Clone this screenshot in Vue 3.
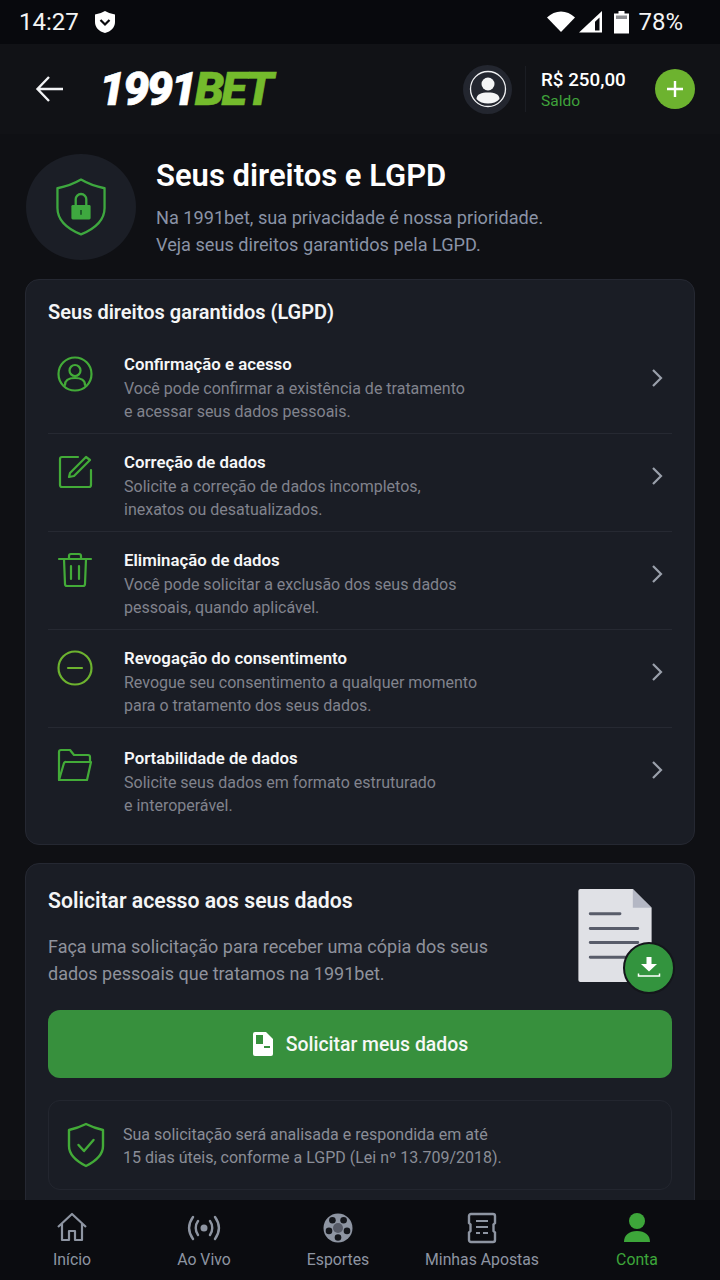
<template>
  <div class="app">
    <div class="status-bar">
      <div class="status-left">
        <span class="time">14:27</span>
        <svg class="status-shield" viewBox="0 0 22 24" width="22" height="24">
          <path d="M11 1Q16 4 21 4.500V12c0 5.500-4 9.500-10 11C5 21.500 1 17.500 1 12V4.500Q6 4 11 1Z" fill="#fff" />
          <path d="M6.500 10 11 14.500 15.500 10" fill="none" stroke="#08090d" stroke-width="2.200" />
        </svg>
      </div>
      <div class="status-right">
        <svg class="s-wifi" viewBox="0 0 28 24" width="28" height="24"><path d="M14 22 0 7.500C4 3.500 9 1.500 14 1.500s10 2 14 6Z" fill="#fff" /></svg>
        <svg class="s-signal" viewBox="0 0 23 24" width="23" height="24"><path d="M0 22.500 23 1v21.500Z" fill="#fff" /><path d="M16 20.500h4.500V7.500L16 11.700Z" fill="#08090d" /></svg>
        <svg class="s-batt" viewBox="0 0 15 24" width="15" height="24"><path d="M4.500 1h6v2.500H15V23.500H0V3.500h4.500Z" fill="#fff" /><path d="M2 5.500h11V9H2Z" fill="#8b8c90" /></svg>
        <span class="battery">78%</span>
      </div>
    </div>

    <header class="top-bar">
      <svg class="back" viewBox="0 0 30 30" width="30" height="30">
        <path d="M29 15H4M15 3 3.500 15 15 27" fill="none" stroke="#f2f3f5" stroke-width="2.400" />
      </svg>
      <div class="logo"><span class="logo-num">1991</span><span class="logo-bet">BET</span></div>
      <div class="account">
        <div class="avatar">
          <svg viewBox="0 0 38 38" width="38" height="38">
            <circle cx="19" cy="19" r="17.500" fill="none" stroke="#f0f1f3" stroke-width="1.300" />
            <circle cx="19" cy="14" r="6.500" fill="#f4f5f6" />
            <path d="M7.500 29c0-5 5-6.500 11.500-6.500S30.500 24 30.500 29c-2.500 3-7 4.500-11.500 4.500S10 32 7.500 29Z" fill="#f4f5f6" />
          </svg>
        </div>
        <div class="divider"></div>
        <div class="balance">
          <span class="amount">R$ 250,00</span>
          <span class="saldo">Saldo</span>
        </div>
        <div class="add">
          <svg viewBox="0 0 20 20" width="20" height="20"><path d="M10 2v16M2 10h16" stroke="#fff" stroke-width="2.400" /></svg>
        </div>
      </div>
    </header>

    <main class="content">
      <section class="hero">
        <div class="hero-icon">
          <svg viewBox="0 0 52 60" width="50" height="58">
            <path d="M26 1.500Q37 8 50.500 10.500V31c0 13-10 21.500-24.500 27.500C11.500 52.500 1.500 44 1.500 31V10.500Q15 8 26 1.500Z" fill="none" stroke="#3ea83f" stroke-width="2.400" stroke-linejoin="round" />
            <rect x="16" y="28" width="20" height="15" rx="1.500" fill="#3ea83f" />
            <path d="M20.500 28v-6a5.500 5.500 0 0 1 11 0v6" fill="none" stroke="#3ea83f" stroke-width="2.400" />
            <path d="M26 33v5" stroke="#1f5d2a" stroke-width="2" />
          </svg>
        </div>
        <div class="hero-text">
          <h1>Seus direitos e LGPD</h1>
          <p>Na 1991bet, sua privacidade é nossa prioridade.<br />Veja seus direitos garantidos pela LGPD.</p>
        </div>
      </section>

      <section class="card rights">
        <h2>Seus direitos garantidos (LGPD)</h2>
        <div v-for="item in rights" :key="item.title" class="row">
          <svg class="row-icon" :class="{ lime: item.lime }" viewBox="0 0 36 36" width="36" height="36" fill="none" stroke-width="2.200" stroke-linecap="round" stroke-linejoin="round">
            <path v-for="d in item.paths" :key="d" :d="d" />
          </svg>
          <div class="row-text">
            <h3>{{ item.title }}</h3>
            <p>{{ item.line1 }}<br />{{ item.line2 }}</p>
          </div>
          <svg class="chevron" viewBox="0 0 14 20" width="14" height="20"><path d="M3 2l8 8-8 8" fill="none" stroke="#9aa0ab" stroke-width="2.200" /></svg>
        </div>
      </section>

      <section class="card request">
        <div class="request-top">
          <div class="request-text">
            <h2>Solicitar acesso aos seus dados</h2>
            <p>Faça uma solicitação para receber uma cópia dos seus<br />dados pessoais que tratamos na 1991bet.</p>
          </div>
          <div class="doc">
            <svg viewBox="0 0 76 96" width="76" height="95">
              <path d="M3 1h53l19 19v73a2 2 0 0 1-2 2H3a2 2 0 0 1-2-2V3a2 2 0 0 1 2-2Z" fill="#e0e1e6" />
              <path d="M56 1v19h19Z" fill="#b4b7c4" />
              <path d="M13 26h30M13 41h48M13 55h48M13 70h48" stroke="#585c6a" stroke-width="3" stroke-linecap="round" />
            </svg>
            <div class="doc-badge">
              <svg viewBox="0 0 24 24" width="24" height="24">
                <path d="M9.500 1h5v7h5.500l-8 7.500L4 8h5.500Z" fill="#fff" />
                <path d="M1.500 17.500v2.500h21v-2.500" fill="none" stroke="#fff" stroke-width="1.500" />
              </svg>
            </div>
          </div>
        </div>
        <button class="cta" type="button">
          <svg viewBox="0 0 22 26" width="22" height="26">
            <path d="M3 1h11l7 7v15a2 2 0 0 1-2 2H3a2 2 0 0 1-2-2V3a2 2 0 0 1 2-2Z" fill="#fff" />
            <path d="M4 4h7v9H4ZM4 4v18" fill="#37903d" />
            <path d="M7 10.500h3v5h9" fill="none" stroke="#fff" stroke-width="0" />
            <path d="M12 16h6" stroke="#37903d" stroke-width="2" />
          </svg>
          Solicitar meus dados
        </button>
        <div class="notice">
          <svg viewBox="0 0 38 46" width="38" height="46" fill="none" stroke="#43ab38" stroke-width="2.400" stroke-linejoin="round">
            <path d="M19 2Q27 6 36 8v16c0 9-7 15-17 20C9 39 2 33 2 24V8Q11 6 19 2Z" />
            <path d="M11.500 23l5.500 6 9.500-11" stroke-linecap="round" />
          </svg>
          <p>Sua solicitação será analisada e respondida em até<br />15 dias úteis, conforme a LGPD (Lei nº 13.709/2018).</p>
        </div>
      </section>
    </main>

    <nav class="bottom-nav">
      <div class="nav-item">
        <svg viewBox="0 0 32 32" width="32" height="32" fill="none" stroke="#8e95a2" stroke-width="2.200" stroke-linejoin="round">
          <path d="M2 15 16 2l14 13M6 12v16h7v-9h6v9h7V12" />
        </svg>
        <span>Início</span>
      </div>
      <div class="nav-item">
        <svg viewBox="0 0 34 32" width="34" height="32" fill="none" stroke="#8e95a2" stroke-width="2.400" stroke-linecap="round">
          <circle cx="17" cy="16" r="3.500" fill="#8e95a2" stroke="none" />
          <path d="M11 9c-3 4-3 10 0 14M23 9c3 4 3 10 0 14M6 5c-5 7-5 15 0 22M28 5c5 7 5 15 0 22" />
        </svg>
        <span>Ao Vivo</span>
      </div>
      <div class="nav-item">
        <svg viewBox="0 0 32 32" width="32" height="32">
          <circle cx="16" cy="16" r="14.500" fill="#8e95a2" />
          <circle cx="16" cy="16" r="5" fill="#565a66" />
          <g fill="#14161b">
            <circle cx="21.600" cy="8.300" r="3.300" />
            <circle cx="10.400" cy="8.300" r="3.300" />
            <circle cx="7" cy="18.900" r="3.300" />
            <circle cx="16" cy="25.500" r="3.300" />
            <circle cx="25" cy="18.900" r="3.300" />
          </g>
        </svg>
        <span>Esportes</span>
      </div>
      <div class="nav-item">
        <svg viewBox="0 0 32 32" width="32" height="32" fill="none" stroke="#8e95a2">
          <path d="M5 2h22a2 2 0 0 1 2 2v7l-1.500 1.500V19l1.500 1.500V28a2 2 0 0 1-2 2H5a2 2 0 0 1-2-2v-7.500L4.500 19v-6.500L3 11V4a2 2 0 0 1 2-2Z" stroke-width="2.400" />
          <path d="M10 9h12M10 15h12M10 21h4M17 21h5" stroke-width="1.800" />
        </svg>
        <span>Minhas Apostas</span>
      </div>
      <div class="nav-item active">
        <svg viewBox="0 0 32 32" width="32" height="32">
          <circle cx="16" cy="9" r="8" fill="#3da63a" />
          <path d="M3 30c0-7 5-11 13-11s13 4 13 11Z" fill="#3da63a" />
        </svg>
        <span>Conta</span>
      </div>
    </nav>
  </div>
</template>

<script setup>
const rights = [
  {
    title: 'Confirmação e acesso',
    line1: 'Você pode confirmar a existência de tratamento',
    line2: 'e acessar seus dados pessoais.',
    paths: [
      'M18 1.500a16.500 16.500 0 1 0 0 33 16.500 16.500 0 0 0 0-33Z',
      'M18 9a5.500 5.500 0 1 0 0 11 5.500 5.500 0 0 0 0-11Z',
      'M8 29c0-5 4-7 10-7s10 2 10 7'
    ]
  },
  {
    title: 'Correção de dados',
    line1: 'Solicite a correção de dados incompletos,',
    line2: 'inexatos ou desatualizados.',
    paths: [
      'M21 3H5a2 2 0 0 0-2 2v26a2 2 0 0 0 2 2h27a2 2 0 0 0 2-2V16',
      'M13 19 29 3l4 3-16 16-5 1Z'
    ]
  },
  {
    title: 'Eliminação de dados',
    line1: 'Você pode solicitar a exclusão dos seus dados',
    line2: 'pessoais, quando aplicável.',
    paths: [
      'M2 7h32M7 7l1 25a2 2 0 0 0 2 2h16a2 2 0 0 0 2-2l1-25',
      'M12 7V4a2 2 0 0 1 2-2h8a2 2 0 0 1 2 2v3',
      'M14 14v13M22 14v13'
    ]
  },
  {
    title: 'Revogação do consentimento',
    line1: 'Revogue seu consentimento a qualquer momento',
    line2: 'para o tratamento dos seus dados.',
    lime: true,
    paths: [
      'M18 1.500a16.500 16.500 0 1 0 0 33 16.500 16.500 0 0 0 0-33Z',
      'M11 18h14'
    ]
  },
  {
    title: 'Portabilidade de dados',
    line1: 'Solicite seus dados em formato estruturado',
    line2: 'e interoperável.',
    paths: [
      'M2 32V4a2 2 0 0 1 2-2h9l4 5h14a2 2 0 0 1 2 2v5',
      'M2 32l5-17a2 2 0 0 1 2-1h25l-4 18Z'
    ]
  }
]
</script>

<style>
html,
body {
  background: #0e0f13;
}
</style>

<style scoped>
.app {
  width: 720px;
  height: 1280px;
  display: flex;
  flex-direction: column;
  overflow: hidden;
  background: #101116;
  font-family: Roboto, "Liberation Sans", sans-serif;
  color: #fff;
}

.status-bar {
  height: 44px;
  flex: none;
  display: flex;
  justify-content: space-between;
  align-items: center;
  padding: 0 37px 0 19px;
  background: #08090d;
  font-size: 24px;
  color: #f4f4f4;
}

.status-left,
.status-right {
  display: flex;
  align-items: center;
}

.status-shield {
  margin-left: 15px;
}

.s-wifi {
  margin-right: 4px;
}

.s-signal {
  margin-right: 12px;
}

.s-batt {
  margin-right: 9px;
}

.top-bar {
  height: 90px;
  flex: none;
  display: flex;
  align-items: center;
  padding: 0 25px 0 34px;
  background: #111216;
}

.logo {
  margin-left: 35px;
  margin-bottom: 2px;
  font-size: 47px;
  font-weight: 900;
  font-style: italic;
  letter-spacing: -2.500px;
  line-height: 1;
  -webkit-text-stroke: 0.6px currentColor;
}

.logo-bet {
  color: #74bb2c;
}

.account {
  margin-left: auto;
  display: flex;
  align-items: center;
}

.avatar {
  width: 49px;
  height: 49px;
  border-radius: 50%;
  background: #23262f;
  display: flex;
  align-items: center;
  justify-content: center;
}

.divider {
  width: 1px;
  height: 46px;
  margin: 0 15px 0 13px;
  background: #1b1d23;
}

.balance {
  display: flex;
  flex-direction: column;
  width: 114px;
}

.amount {
  font-size: 18.800px;
  font-weight: 500;
  line-height: 24px;
}

.saldo {
  font-size: 15.500px;
  line-height: 18px;
  color: #3fa33b;
}

.add {
  width: 40px;
  height: 40px;
  border-radius: 50%;
  background: #6db32f;
  display: flex;
  align-items: center;
  justify-content: center;
}

.content {
  flex: 1;
  min-height: 0;
  overflow: hidden;
  padding: 20px 25px 0 25px;
  background: #0f1014;
}

.hero {
  display: flex;
  align-items: center;
  height: 105px;
}

.hero-icon {
  width: 110px;
  height: 106px;
  margin-left: 1px;
  border-radius: 50%;
  background: #1b1e26;
  display: flex;
  align-items: center;
  justify-content: center;
}

.hero-text {
  margin-left: 20px;
}

h1 {
  margin: 2px 0 10px;
  font-size: 31px;
  font-weight: 600;
  line-height: 36px;
  color: #fff;
}

.hero-text p {
  margin: 0;
  font-size: 18.150px;
  line-height: 27px;
  color: #8a93a6;
}

.card {
  background: #1a1d25;
  border: 1px solid #252832;
  border-radius: 14px;
}

.rights {
  margin-top: 20px;
  padding: 18px 22px 0;
  height: 566px;
  box-sizing: border-box;
}

h2 {
  margin: 0;
  font-size: 20px;
  font-weight: 600;
  line-height: 28px;
  color: #f4f5f6;
}

.rights h2 {
  margin-bottom: 10px;
}

.row {
  height: 98px;
  box-sizing: border-box;
  display: flex;
  align-items: flex-start;
  border-bottom: 1px solid #262932;
}

.row:last-child {
  border-bottom: none;
}

.row-icon {
  margin-left: 9px;
  flex: none;
  margin-top: 20px;
  stroke: #43ab38;
}

.row-icon.lime {
  stroke: #6db32f;
}

.row-text {
  margin-left: 31px;
  padding-top: 16px;
  flex: 1;
}

.row:last-child .row-text {
  padding-top: 18px;
}

h3 {
  margin: 0 0 1px;
  font-size: 16.800px;
  font-weight: 600;
  line-height: 24px;
  color: #f6f7f8;
}

.row-text p {
  margin: 0;
  font-size: 16px;
  line-height: 23px;
  color: #81838d;
}

.chevron {
  margin-right: 8px;
  margin-top: 32px;
}

.request {
  margin-top: 18px;
  padding: 23px 22px 0;
  height: 420px;
  box-sizing: border-box;
}

.request h2 {
  font-size: 21.200px;
}

.request-top {
  display: flex;
  justify-content: space-between;
  height: 123px;
}

.request-text p {
  margin: 18px 0 0;
  font-size: 18px;
  line-height: 27px;
  color: #8f929c;
}

.doc {
  position: relative;
  width: 76px;
  height: 95px;
  margin-right: 19px;
  margin-top: 1px;
}

.doc-badge {
  position: absolute;
  right: -22px;
  bottom: -11px;
  width: 48px;
  height: 48px;
  border-radius: 50%;
  border: 2px solid #14161b;
  background: #33943e;
  display: flex;
  align-items: center;
  justify-content: center;
}

.cta {
  width: 100%;
  height: 68px;
  border: none;
  border-radius: 12px;
  background: #37903d;
  color: #f6f8f6;
  font-family: inherit;
  font-size: 19.400px;
  font-weight: 500;
  display: flex;
  align-items: center;
  justify-content: center;
  gap: 12px;
}

.notice {
  margin-top: 22px;
  height: 90px;
  box-sizing: border-box;
  display: flex;
  align-items: center;
  gap: 18px;
  padding-left: 18px;
  border: 1px solid #23262f;
  border-radius: 12px;
}

.notice p {
  margin: 2px 0 0;
  font-size: 16px;
  line-height: 23px;
  color: #8a8d97;
}

.bottom-nav {
  height: 80px;
  flex: none;
  display: grid;
  grid-template-columns: 144px 120px 148px 140px 170px;
  background: #0b0c10;
}

.nav-item {
  display: flex;
  flex-direction: column;
  align-items: center;
  padding-top: 12px;
  font-size: 15.800px;
  line-height: 22px;
  color: #8e95a2;
}

.nav-item span {
  margin-top: 5px;
}

.nav-item.active {
  color: #3da63a;
}
</style>
